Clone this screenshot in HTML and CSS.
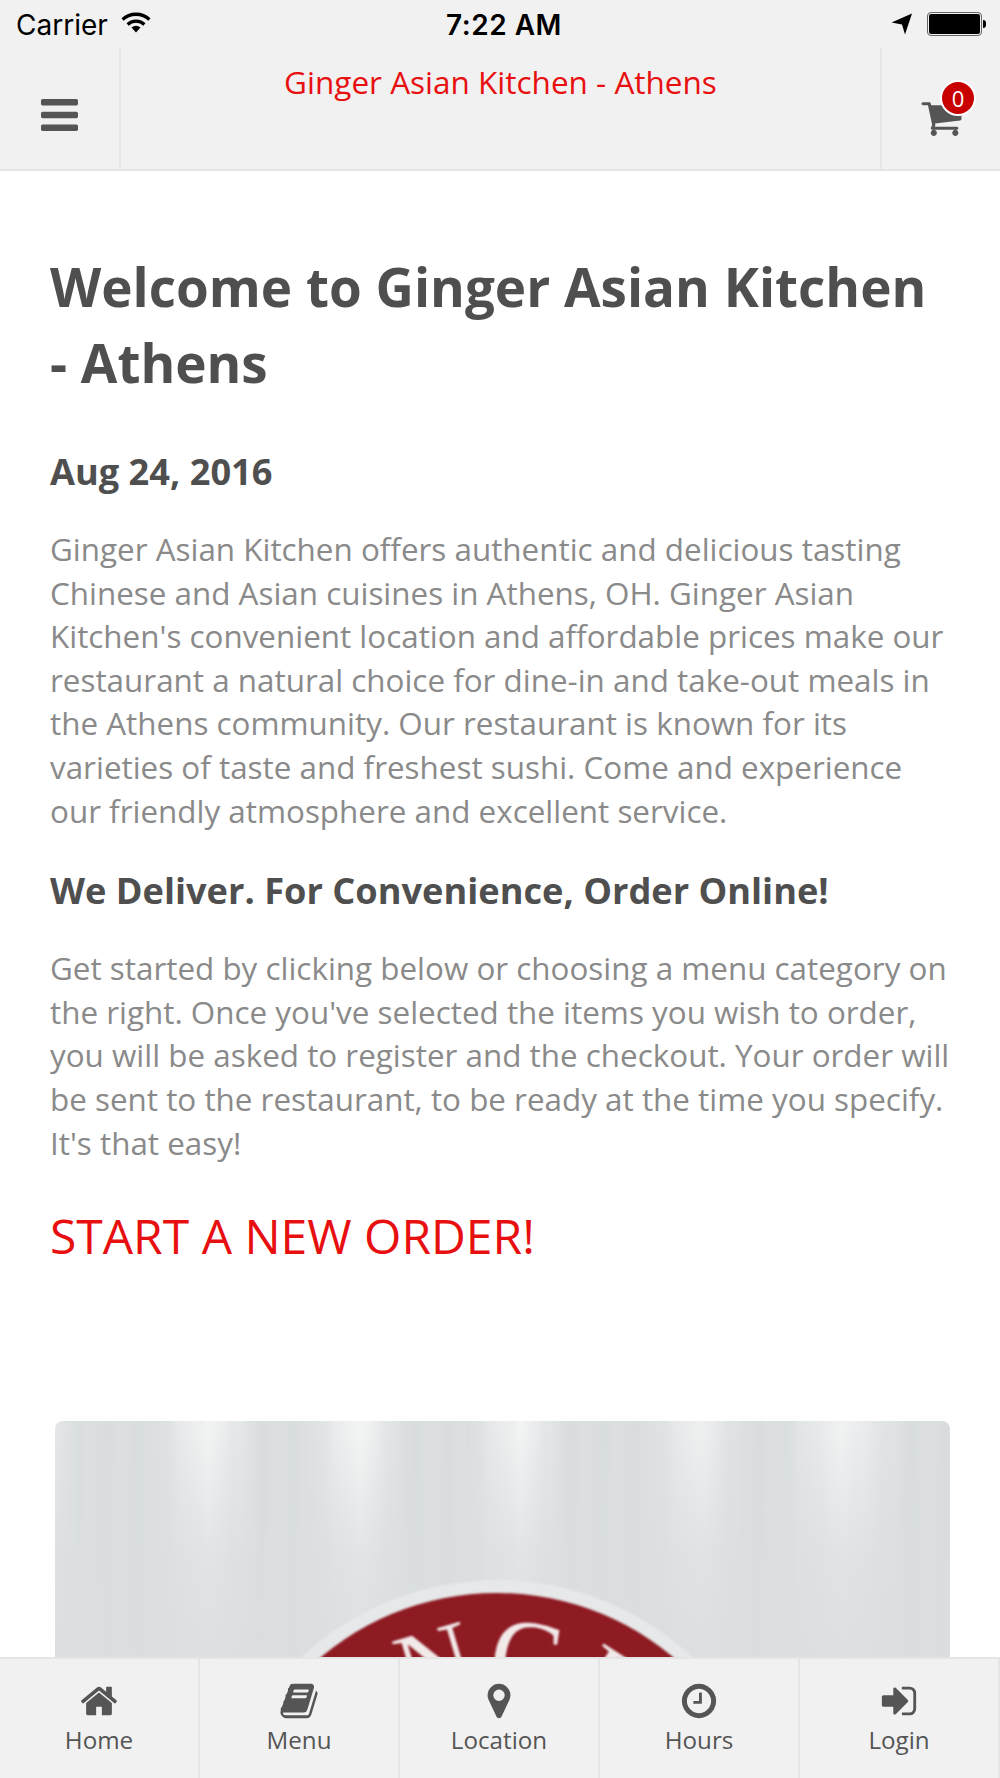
FILE: index.html
```html
<!DOCTYPE html>
<html lang="en">

<head>
    <meta charset="UTF-8"/>
    <meta content="width=device-width, initial-scale=1.0" name="viewport"/>
    <title>Ginger Asian Kitchen - Athens</title>
    <link rel="stylesheet" href="styles.css">
</head>

<body>
    <div class="page">
        <!-- status bar -->
        <div class="status">
            <div class="status-left">
                <span class="carrier">Carrier</span>
                <svg class="wifi" viewBox="0 0 30 22">
                    <path d="M15 21.500 L10.500 16.500 Q15 13 19.500 16.500 Z"/>
                    <path d="M15 8.500 Q20.800 8.500 24.500 12.300 L22.300 14.700 Q19.300 11.800 15 11.800 Q10.700 11.800 7.700 14.700 L5.500 12.300 Q9.200 8.500 15 8.500 Z"/>
                    <path d="M15 1.500 Q23.600 1.500 29.500 7.300 L27.300 9.700 Q22.300 5 15 5 Q7.700 5 2.700 9.700 L0.500 7.300 Q6.400 1.500 15 1.500 Z"/>
                </svg>
            </div>
            <span class="clock">7:22 AM</span>
            <div class="status-right">
                <svg class="arrow" viewBox="0 0 22 22"><path d="M21 0.500 L14 21.500 L11 11.500 L0.500 9.500 Z"/></svg>
                <div class="battery"><div class="battery-fill"></div></div>
                <div class="battery-tip"></div>
            </div>
        </div>

        <!-- top bar -->
        <div class="topbar">
            <div class="topbar-btn">
                <svg class="icon-bars" viewBox="128 256 1536 1280" preserveAspectRatio="none"><path d="M1664 1344v128q0 26-19 45t-45 19h-1408q-26 0-45-19t-19-45v-128q0-26 19-45t45-19h1408q26 0 45 19t19 45zm0-512v128q0 26-19 45t-45 19h-1408q-26 0-45-19t-19-45v-128q0-26 19-45t45-19h1408q26 0 45 19t19 45zm0-512v128q0 26-19 45t-45 19h-1408q-26 0-45-19t-19-45v-128q0-26 19-45t45-19h1408q26 0 45 19t19 45z"/></svg>
            </div>
            <div class="topbar-title">Ginger Asian Kitchen - Athens</div>
            <div class="topbar-cart">
                <svg class="icon-cart" viewBox="0 0 1792 1792"><path d="M704 1536q0 52-38 90t-90 38-90-38-38-90 38-90 90-38 90 38 38 90zm896 0q0 52-38 90t-90 38-90-38-38-90 38-90 90-38 90 38 38 90zm128-1088v512q0 24-16.500 42.500t-40.500 21.500l-1044 122q13 60 13 70 0 16-24 64h920q26 0 45 19t19 45-19 45-45 19h-1024q-26 0-45-19t-19-45q0-11 8-31.500t16-36 21.500-40 15.500-29.500l-177-823h-204q-26 0-45-19t-19-45 19-45 45-19h256q16 0 28.500 6.500t19.500 15.500 13 24.500 8 26 5.500 29.500 4.500 26h1201q26 0 45 19t19 45z"/></svg>
                <span class="badge">0</span>
            </div>
        </div>

        <!-- content -->
        <div class="content">
            <h1>Welcome to Ginger Asian Kitchen - Athens</h1>
            <h3 class="date">Aug 24, 2016</h3>
            <p>Ginger Asian Kitchen offers authentic and delicious tasting Chinese and Asian cuisines in Athens, OH. Ginger Asian Kitchen's convenient location and affordable prices make our restaurant a natural choice for dine-in and take-out meals in the Athens community. Our restaurant is known for its varieties of taste and freshest sushi. Come and experience our friendly atmosphere and excellent service.</p>
            <h3 class="deliver">We Deliver. For Convenience, Order Online!</h3>
            <p>Get started by clicking below or choosing a menu category on the right. Once you've selected the items you wish to order, you will be asked to register and the checkout. Your order will be sent to the restaurant, to be ready at the time you specify. It's that easy!</p>
            <a class="start" href="#">START A NEW ORDER!</a>

            <!-- restaurant picture, only its top shows above the tab bar -->
            <div class="photo">
                <svg class="logo" viewBox="0 0 895 240">
                    <circle class="logo-ring" cx="442" cy="446" r="287"/>
                    <circle class="logo-disc" cx="442" cy="446" r="274"/>
                    <path id="logo-arc" d="M265 446 A177 177 0 0 1 619 446" fill="none"/>
                    <text class="logo-text"><textPath href="#logo-arc" startOffset="50%" text-anchor="middle">GINGER</textPath></text>
                </svg>
            </div>
        </div>

        <!-- tab bar -->
        <div class="tabbar">
            <a class="tab" href="#">
                <svg viewBox="0 0 1792 1792"><path d="M1472 992v480q0 26-19 45t-45 19h-384v-384h-256v384h-384q-26 0-45-19t-19-45v-480q0-1 .5-3t.5-3l575-474 575 474q1 2 1 6zm223-69l-62 74q-8 9-21 11h-3q-13 0-21-7l-692-577-692 577q-12 8-24 7-13-2-21-11l-62-74q-8-10-7-23.500t11-21.500l719-599q32-26 76-26t76 26l244 204v-195q0-14 9-23t23-9h192q14 0 23 9t9 23v408l219 182q10 8 11 21.500t-7 23.500z"/></svg>
                <span>Home</span>
            </a>
            <a class="tab" href="#">
                <svg viewBox="0 0 1792 1792"><path d="M1703 478q40 57 18 129l-275 906q-19 64-76.500 107.500t-122.500 43.500h-923q-77 0-148.500-53.500t-99.500-131.500q-24-67-2-127 0-4 3-27t4-37q1-8-3-21.500t-3-19.500q2-11 8-21t16.500-23.500 16.500-23.500q23-38 45-91.500t30-91.500q3-10 .5-30t-.5-28q3-11 17-28t17-23q21-36 42-92t25-90q1-9-2.500-32t.5-28q4-13 22-30.500t22-22.500q19-26 42.500-84.500t27.500-96.500q1-8-3-25.500t-2-26.500q2-8 9-18t18-23 17-21q8-12 16.500-30.500t15-35 16-36 19.500-32 26.500-23.500 36-11.500 47.500 5.500l-1 3q38-9 51-9h761q74 0 114 56t18 130l-274 906q-36 119-71.500 153.500t-128.500 34.500h-869q-27 0-38 15-11 16-1 43 24 70 144 70h923q29 0 56-15.500t35-41.500l300-987q7-22 5-57 38 15 59 43zm-1064 2q-4 13 2 22.500t20 9.500h608q13 0 25.500-9.500t16.500-22.500l21-64q4-13-2-22.500t-20-9.500h-608q-13 0-25.500 9.500t-16.500 22.500zm-83 256q-4 13 2 22.500t20 9.500h608q13 0 25.500-9.500t16.500-22.500l21-64q4-13-2-22.500t-20-9.500h-608q-13 0-25.500 9.500t-16.500 22.500z"/></svg>
                <span>Menu</span>
            </a>
            <a class="tab" href="#">
                <svg viewBox="0 0 1792 1792"><path d="M1152 640q0-106-75-181t-181-75-181 75-75 181 75 181 181 75 181-75 75-181zm256 0q0 109-33 179l-364 774q-16 33-47.500 52t-67.500 19-67.500-19-46.500-52l-365-774q-33-70-33-179 0-212 150-362t362-150 362 150 150 362z"/></svg>
                <span>Location</span>
            </a>
            <a class="tab" href="#">
                <svg viewBox="0 0 1792 1792"><path d="M1024 544v448q0 14-9 23t-23 9h-320q-14 0-23-9t-9-23v-64q0-14 9-23t23-9h224v-352q0-14 9-23t23-9h64q14 0 23 9t9 23zm416 352q0-148-73-273t-198-198-273-73-273 73-198 198-73 273 73 273 198 198 273 73 273-73 198-198 73-273zm224 0q0 209-103 385.500t-279.500 279.500-385.500 103-385.500-103-279.500-279.500-103-385.500 103-385.500 279.500-279.500 385.500-103 385.500 103 279.500 279.500 103 385.500z"/></svg>
                <span>Hours</span>
            </a>
            <a class="tab" href="#">
                <svg viewBox="0 0 1792 1792"><path d="M1312 896q0 26-19 45l-544 544q-19 19-45 19t-45-19-19-45v-288h-448q-26 0-45-19t-19-45v-384q0-26 19-45t45-19h448v-288q0-26 19-45t45-19 45 19l544 544q19 19 19 45zm352-352v704q0 119-84.500 203.500t-203.500 84.500h-320q-13 0-22.500-9.500t-9.500-22.500q0-4-1-20t-.5-26.500 3-23.500 10-19.500 20.500-6.500h320q66 0 113-47t47-113v-704q0-66-47-113t-113-47h-312l-11.500-1-11.500-3-8-5.500-7-9-2-13.500q0-4-1-20t-.5-26.500 3-23.500 10-19.500 20.500-6.500h320q119 0 203.500 84.500t84.500 203.500z"/></svg>
                <span>Login</span>
            </a>
        </div>
    </div>
</body>

</html>
```

FILE: styles.css
```css
* {
    margin: 0;
    padding: 0;
    box-sizing: border-box;
}

body {
    font-family: "Open Sans", "Liberation Sans", sans-serif;
    background: #fff;
}

a {
    text-decoration: none;
}

.page {
    width: 1000px;
    height: 1778px;
    overflow: hidden;
    position: relative;
}

/* status bar */
.status {
    height: 48px;
    background: #f1f1f1;
    display: grid;
    grid-template-columns: 1fr auto 1fr;
    align-items: center;
    padding: 2px 16px 0;
    color: #000;
    font-family: Inter, "Liberation Sans", sans-serif;
}

.status-left {
    display: flex;
    align-items: center;
    gap: 13px;
}

.carrier {
    font-size: 28px;
}

.wifi {
    width: 30px;
    height: 22px;
    margin-bottom: 6px;
}

.clock {
    font-size: 28px;
    font-weight: 600;
    letter-spacing: 0.500px;
    margin-left: 8px;
}

.status-right {
    display: flex;
    align-items: center;
    justify-content: flex-end;
    margin-top: -2px;
}

.arrow {
    width: 22px;
    height: 22px;
    margin-right: 14px;
}

.battery {
    width: 55px;
    height: 24px;
    border: 1px solid #666;
    border-radius: 4px;
    padding: 1px;
}

.battery-fill {
    height: 100%;
    background: #000;
    border-radius: 2px;
}

.battery-tip {
    width: 3px;
    height: 8px;
    background: #000;
    border-radius: 0 3px 3px 0;
    margin-left: 1px;
    margin-right: -2px;
}

/* top bar */
.topbar {
    height: 123px;
    background: #f1f1f1;
    border-bottom: 2px solid #e5e5e5;
    display: flex;
}

.topbar-btn {
    width: 121px;
    border-right: 2px solid #e5e5e5;
    padding: 51px 0 0 41px;
}

.icon-bars {
    display: block;
    width: 37px;
    height: 32px;
    fill: #555;
}

.topbar-title {
    flex: 1;
    text-align: center;
    color: #e70f0f;
    font-size: 31.500px;
    line-height: 40px;
    padding-top: 14px;
}

.topbar-cart {
    width: 120px;
    border-left: 2px solid #e5e5e5;
    position: relative;
}

.icon-cart {
    position: absolute;
    left: 38px;
    top: 48px;
    width: 43px;
    height: 43px;
    fill: #555;
}

.badge {
    position: absolute;
    left: 58px;
    top: 32px;
    width: 36px;
    height: 36px;
    border: 2px solid #fff;
    border-radius: 50%;
    background: #c80000;
    color: #fff;
    font-size: 22px;
    line-height: 32px;
    text-align: center;
}

/* content */
.content {
    padding: 0 50px;
}

h1 {
    font-size: 53px;
    font-weight: 700;
    line-height: 76px;
    color: #4f4f4f;
    padding-top: 78px;
}

h3 {
    font-size: 36.200px;
    font-weight: 700;
    line-height: 44px;
    color: #4f4f4f;
}

.date {
    margin-top: 48px;
}

.deliver {
    margin-top: 36px;
}

.content p {
    font-size: 31.400px;
    line-height: 43.600px;
    color: #8a8a8a;
    margin-top: 34px;
}

.start {
    display: block;
    font-size: 48px;
    line-height: 64px;
    color: #e70f0f;
    margin-top: 40px;
}

.photo {
    width: 895px;
    height: 240px;
    margin: 153px 0 0 5px;
    border-radius: 8px 8px 0 0;
    overflow: hidden;
    background-color: #dadedf;
    background-image:
        linear-gradient(to bottom, rgba(218, 222, 223, 0) 4%, rgba(218, 222, 223, 0.7) 56%, rgba(218, 222, 223, 0.9) 100%),
        linear-gradient(to right,
            rgba(255, 255, 255, 0.25) 0%, rgba(255, 255, 255, 0) 3%,
            rgba(255, 255, 255, 0) 11%, rgba(255, 255, 255, 0.65) 17%, rgba(255, 255, 255, 0) 23%,
            rgba(255, 255, 255, 0) 28%, rgba(255, 255, 255, 0.7) 34%, rgba(255, 255, 255, 0) 39%,
            rgba(255, 255, 255, 0) 46%, rgba(255, 255, 255, 0.65) 52%, rgba(255, 255, 255, 0) 57%,
            rgba(255, 255, 255, 0) 66%, rgba(255, 255, 255, 0.55) 72%, rgba(255, 255, 255, 0) 77%,
            rgba(255, 255, 255, 0) 81%, rgba(255, 255, 255, 0.6) 88%, rgba(255, 255, 255, 0) 95%),
        repeating-linear-gradient(to right, rgba(255, 255, 255, 0.05) 0, rgba(255, 255, 255, 0) 13px, rgba(120, 130, 135, 0.025) 23px, rgba(255, 255, 255, 0.05) 31px);
}

.logo {
    display: block;
    width: 895px;
    height: 240px;
    filter: blur(0.8px);
}

.logo-ring {
    fill: #e6e8e9;
}

.logo-disc {
    fill: #8e1a22;
}

.logo-text {
    font-family: "Liberation Serif", serif;
    font-size: 105px;
    fill: #f2e9e9;
    letter-spacing: 3px;
}

/* tab bar */
.tabbar {
    position: absolute;
    left: 0;
    right: 0;
    bottom: 0;
    height: 121px;
    background: #f1f1f1;
    border-top: 2px solid #e5e5e5;
    display: flex;
}

.tab {
    flex: 1;
    display: flex;
    flex-direction: column;
    align-items: center;
    border-right: 2px solid #e5e5e5;
    color: #555;
    font-size: 24.200px;
    line-height: 34px;
    padding-top: 22px;
}

.tab svg {
    width: 40px;
    height: 40px;
    fill: #555;
    margin-bottom: 2px;
}
```
